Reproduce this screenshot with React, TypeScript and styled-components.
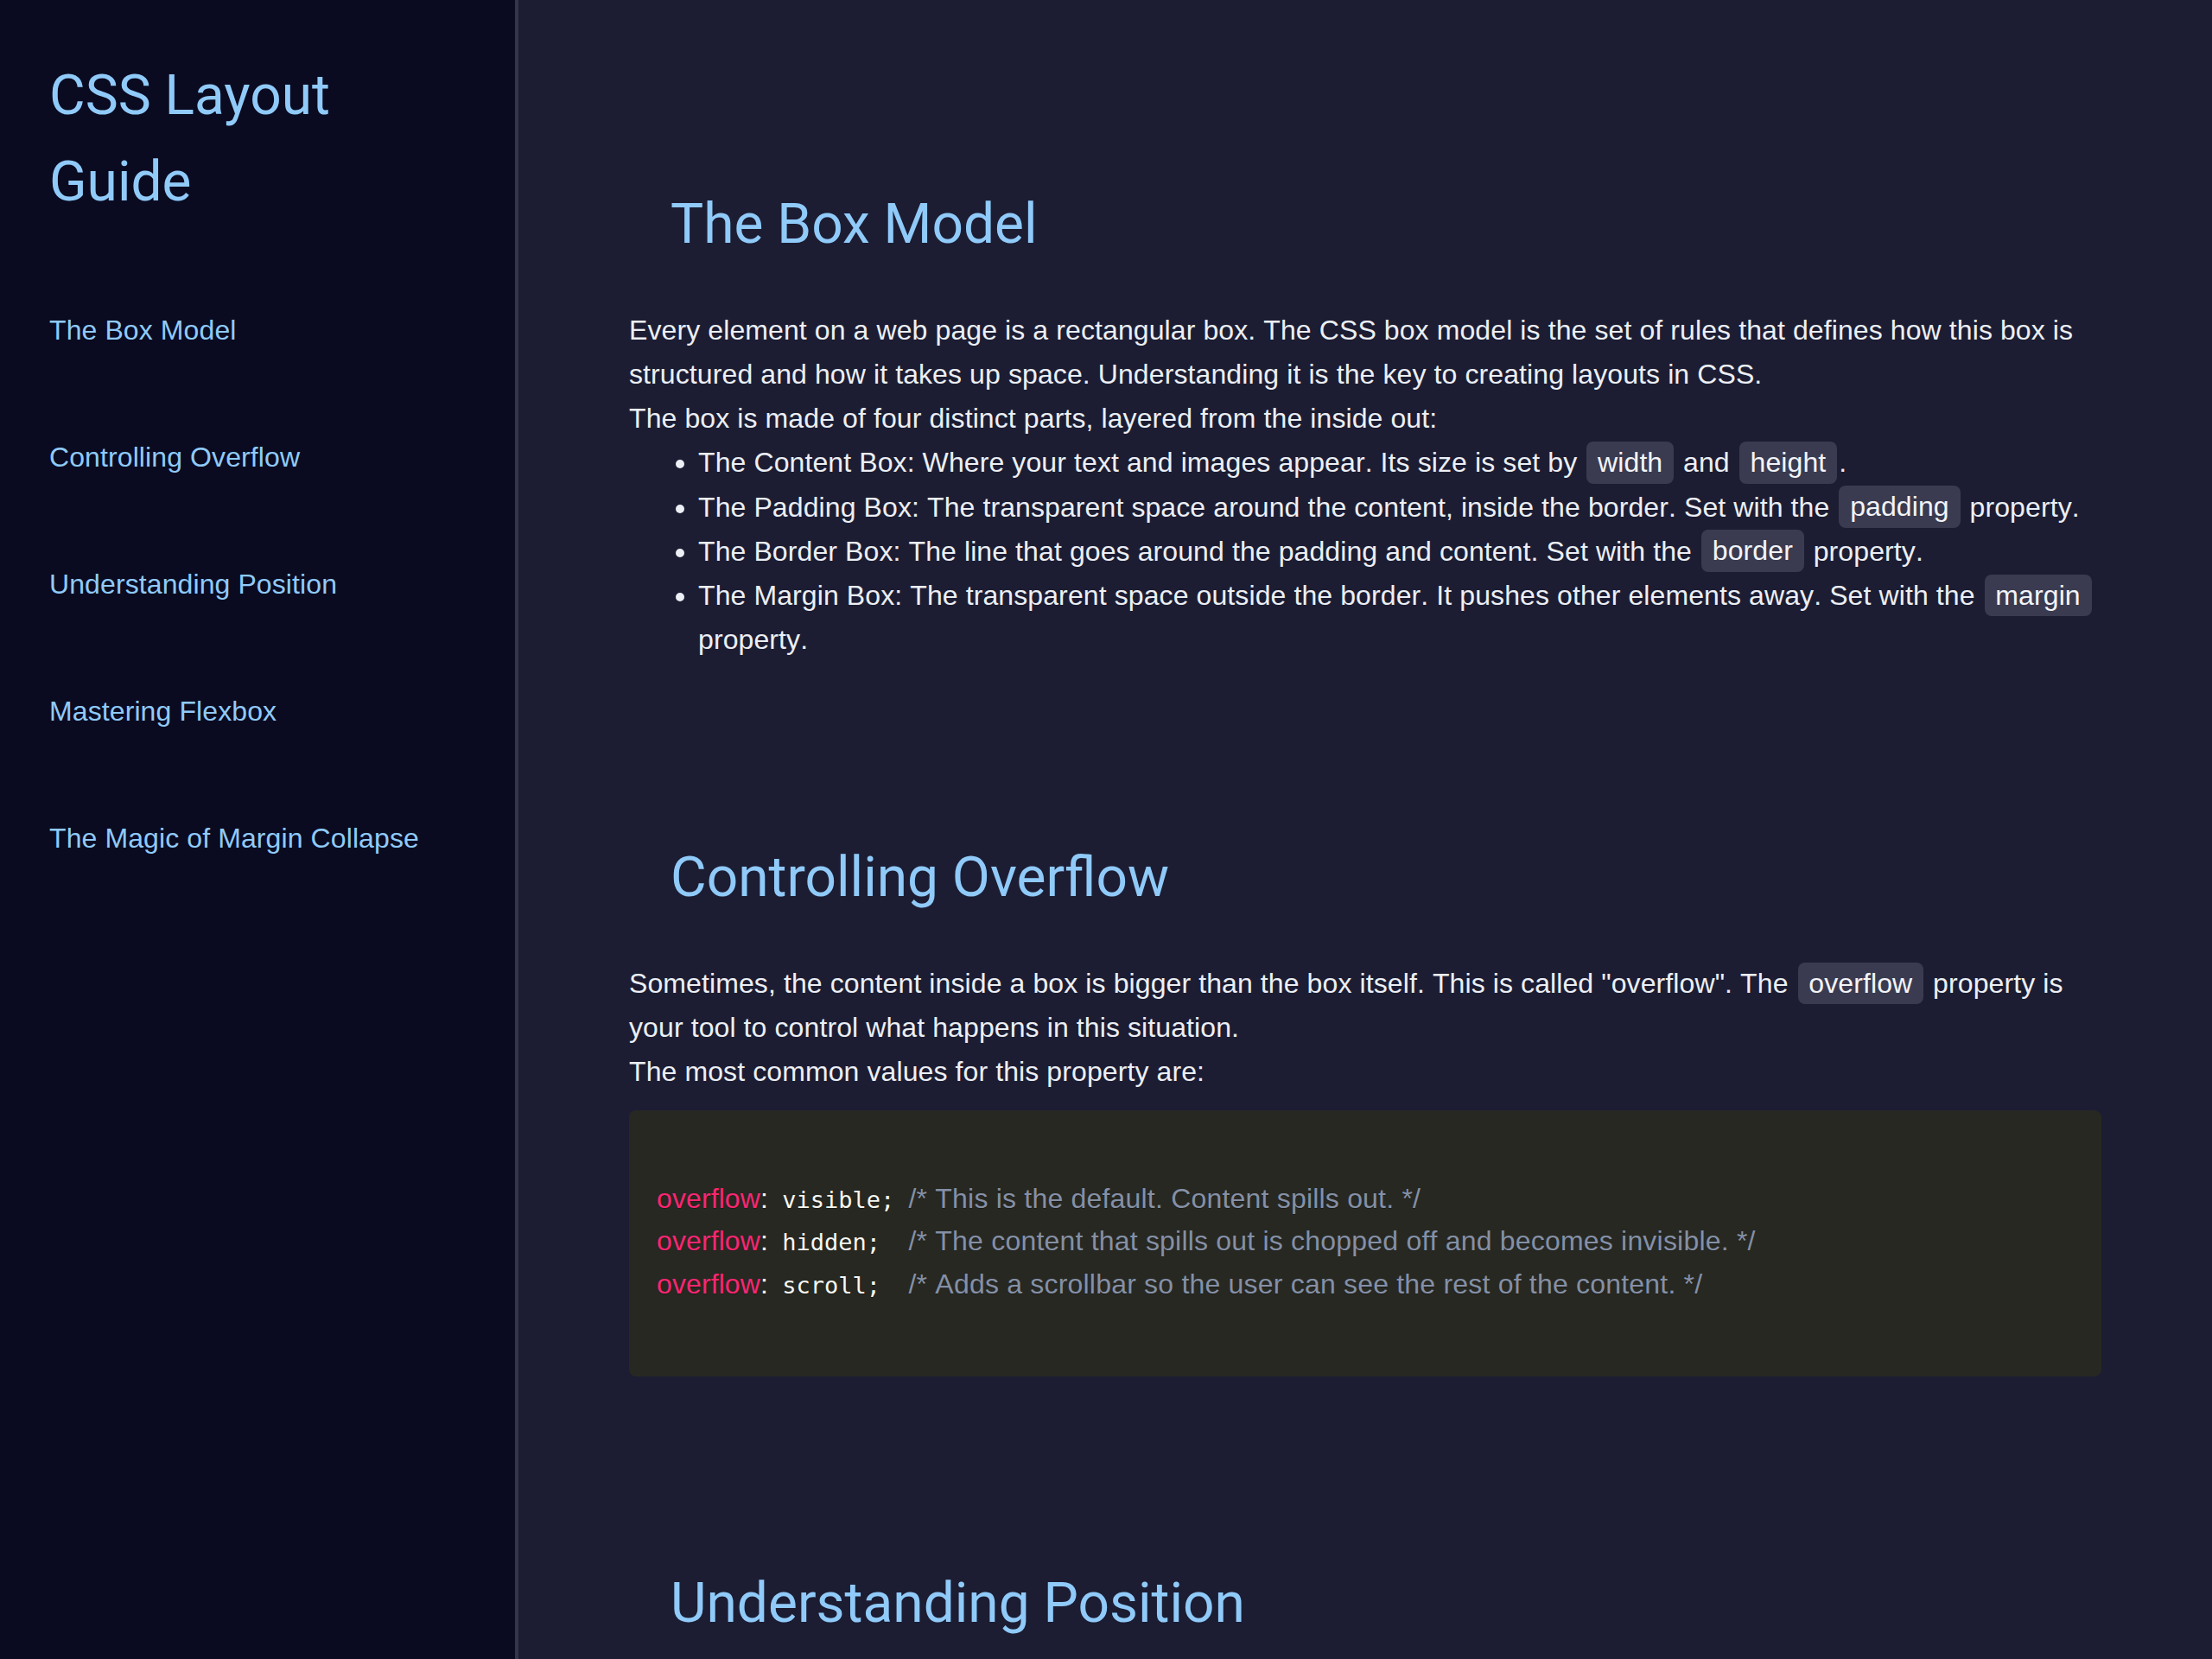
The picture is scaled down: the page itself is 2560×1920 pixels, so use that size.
import React from 'react';
import styled, { createGlobalStyle } from 'styled-components';

const GlobalStyle = createGlobalStyle`
  html, body {
    margin: 0;
    padding: 0;
    background: #1c1d33;
  }

  body {
    font-family: 'Liberation Sans', Arial, sans-serif;
    font-size: 32px;
    line-height: 1.6;
    font-kerning: none;
    letter-spacing: 0.1px;
    color: #eceff4;
  }

  * {
    box-sizing: border-box;
  }
`;

const accent = '#90caf9';

const Layout = styled.div`
  display: grid;
  grid-template-columns: 600px 1fr;
  min-height: 100vh;
`;

const Sidebar = styled.aside`
  position: sticky;
  top: 0;
  align-self: start;
  height: 100vh;
  display: flex;
  flex-direction: column;
  gap: 96px;
  padding: 61px 56px 61px 57px;
  background: #0a0b21;
  border-right: 4px solid #34354b;
`;

const Title = styled.h1`
  margin: 0;
  font-family: Roboto, 'Liberation Sans', sans-serif;
  font-kerning: normal;
  letter-spacing: 0;
  font-size: 64px;
  font-weight: 400;
  line-height: 1.56;
  color: ${accent};
`;

const Nav = styled.nav`
  display: flex;
  flex-direction: column;
  gap: 96px;
`;

const NavLink = styled.a`
  color: ${accent};
  text-decoration: none;
  font-size: 32px;
  line-height: 1.6;
`;

const Main = styled.main`
  display: flex;
  flex-direction: column;
  gap: 212px;
  padding: 222px 128px 240px;
`;

const Section = styled.section`
  display: flex;
  flex-direction: column;
`;

const Heading = styled.h2`
  margin: 0 0 58px;
  padding-left: 48px;
  font-family: Roboto, 'Liberation Sans', sans-serif;
  font-kerning: normal;
  letter-spacing: 0;
  font-size: 64px;
  font-weight: 400;
  line-height: 1.2;
  color: ${accent};
`;

const Text = styled.p`
  margin: 0;
`;

const List = styled.ul`
  margin: 0;
  padding-left: 80px;
`;

const Code = styled.code`
  margin: 0 2px;
  padding: 0.2em 0.4em;
  border-radius: 8px;
  background: #3a3b50;
  font-family: inherit;
  color: #f3f4f8;
`;

const Pre = styled.pre`
  margin: 18px 0 13px;
  padding: 28px 32px 31px;
  border-radius: 8px;
  background: #272822;
  font-family: 'Liberation Sans', Arial, sans-serif;
  font-size: 32px;
  line-height: 1.56;
  white-space: pre;
  color: #f8f8f2;
  text-shadow: 0 1px rgba(0, 0, 0, 0.3);
`;

const Prop = styled.span`
  color: #f92672;
`;

const Value = styled.span`
  font-family: 'DejaVu Sans Mono', monospace;
  font-size: 27px;
  letter-spacing: 0;
  color: #f8f8f2;
`;

const Comment = styled.span`
  color: #8590a6;
  letter-spacing: 0.2px;
`;

const navItems = [
  'The Box Model',
  'Controlling Overflow',
  'Understanding Position',
  'Mastering Flexbox',
  'The Magic of Margin Collapse',
];

const overflowRules = [
  { value: ' visible; ', note: '/* This is the default. Content spills out. */' },
  { value: ' hidden;  ', note: '/* The content that spills out is chopped off and becomes invisible. */' },
  { value: ' scroll;  ', note: '/* Adds a scrollbar so the user can see the rest of the content. */' },
];

export default function App() {
  return (
    <>
      <GlobalStyle />
      <Layout>
        <Sidebar>
          <Title>CSS Layout Guide</Title>
          <Nav>
            {navItems.map((item) => (
              <NavLink key={item} href="#">
                {item}
              </NavLink>
            ))}
          </Nav>
        </Sidebar>

        <Main>
          <Section>
            <Heading>The Box Model</Heading>
            <Text>
              Every element on a web page is a rectangular box. The CSS box model is the set of
              rules that defines how this box is structured and how it takes up space.
              Understanding it is the key to creating layouts in CSS.
            </Text>
            <Text>The box is made of four distinct parts, layered from the inside out:</Text>
            <List>
              <li>
                The Content Box: Where your text and images appear. Its size is set by{' '}
                <Code>width</Code> and <Code>height</Code>.
              </li>
              <li>
                The Padding Box: The transparent space around the content, inside the border. Set
                with the <Code>padding</Code> property.
              </li>
              <li>
                The Border Box: The line that goes around the padding and content. Set with the{' '}
                <Code>border</Code> property.
              </li>
              <li>
                The Margin Box: The transparent space outside the border. It pushes other elements
                away. Set with the <Code>margin</Code> property.
              </li>
            </List>
          </Section>

          <Section>
            <Heading>Controlling Overflow</Heading>
            <Text>
              Sometimes, the content inside a box is bigger than the box itself. This is called
              "overflow". The <Code>overflow</Code> property is your tool to control what happens
              in this situation.
            </Text>
            <Text>The most common values for this property are:</Text>
            <Pre>
              {'\n'}
              {overflowRules.map((rule) => (
                <React.Fragment key={rule.value}>
                  <Prop>overflow</Prop>:<Value>{rule.value}</Value>
                  <Comment>{rule.note}</Comment>
                  {'\n'}
                </React.Fragment>
              ))}
              {'\u200b'}
            </Pre>
          </Section>

          <Section>
            <Heading>Understanding Position</Heading>
            <Text>
              The <Code>position</Code> property decides how an element is placed on the page and
              whether it takes part in the normal flow of the document.
            </Text>
          </Section>
        </Main>
      </Layout>
    </>
  );
}
